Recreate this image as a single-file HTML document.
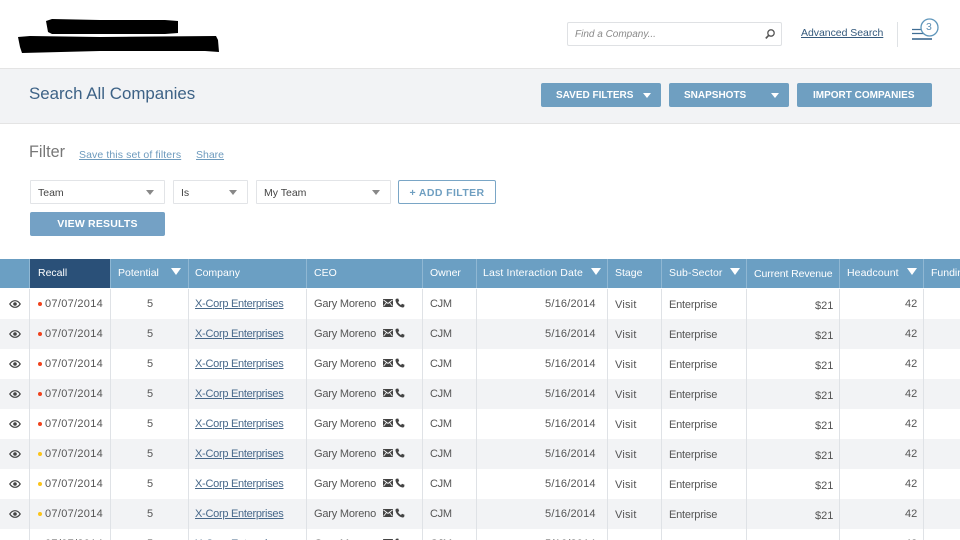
<!DOCTYPE html>
<html>
<head>
<meta charset="utf-8">
<style>
html,body{margin:0;padding:0;background:#fff}
#p{position:relative;width:960px;height:540px;overflow:hidden;background:#fff;font-family:"Liberation Sans",sans-serif;font-size:10.5px;color:#555;filter:blur(.25px)}
#p div,#p span,#p a,#p svg{position:absolute;white-space:nowrap}
.btn{background:#6f9fc1;border-radius:2px;top:83px;height:24px;line-height:24px;color:#fff;font-weight:bold;font-size:10px}
.btn span{top:1px}
.tri{width:0;height:0;border-left:4px solid transparent;border-right:4px solid transparent;border-top:5px solid #fff}
.sel{top:180px;height:22px;line-height:24px;background:#fff;border:1px solid #e2e4e7;border-radius:1px;color:#444;font-size:10.5px}
.sel i{position:absolute;top:9px;width:0;height:0;border-left:4px solid transparent;border-right:4px solid transparent;border-top:5px solid #888}
.sel span{left:7px;top:0}
.lnk{color:#6d9abd;text-decoration:underline;font-size:10.5px;top:149px;letter-spacing:.1px}
.hd{top:259px;height:29px;background:#6b9fc3;left:0;width:960px}
.th{top:267px;color:#fff;font-size:10.5px;line-height:13px}
.st{top:268px;width:0;height:0;border-left:5px solid transparent;border-right:5px solid transparent;border-top:7px solid #fff}
.hl{top:259px;height:29px;width:1px;background:#8fb7d3}
.vl{top:289px;height:251px;width:1px;background:#dfe2e6}
.r{left:0;width:960px;height:30px}
.alt{background:#f2f3f5}
.r span{line-height:13px;font-size:11px;color:#555}
.r .d{left:45px;top:9px;letter-spacing:.3px}
.r .n{left:147px;top:9px}
.r a{left:195px;top:9px;color:#47688a;font-size:11px;text-decoration:underline;line-height:13px;letter-spacing:-.28px}
.r .g{left:314px;top:9px;letter-spacing:-.2px}
.r .o{left:430px;top:9px;letter-spacing:-.3px}
.r .l{left:545px;top:9px;letter-spacing:.2px}
.r .v{left:615px;top:10px;letter-spacing:.2px}
.r .e{left:669px;top:10px;letter-spacing:-.2px}
.r .m{left:815px;top:11px}
.r .h{left:905px;top:9px}
.dot{left:38px;top:13px;width:4px;height:4px;border-radius:50%}
.red{background:#f0421c}
.yel{background:#fcc419}
.eye{left:9px;top:10px}
.ml{left:383px;top:10px}
.ph{left:395px;top:9px}
</style>
</head>
<body>
<div id="p">
<svg style="left:0;top:0" width="260" height="60"><polygon fill="#000" points="46,21 52,19 100,20 165,20 178,21 178,33 165,34 52,34 48,32" /><polygon fill="#000" points="18,37 30,36 100,37 216,36 218,40 219,52 205,51 100,51 22,53 20,47" /></svg>

<div style="left:567px;top:22px;width:213px;height:22px;border:1px solid #dfe1e4;border-radius:2px;background:#fff"></div>
<span style="left:575px;top:28px;font-style:italic;color:#8a8a8a;font-size:10px;line-height:13px">Find a Company...</span>
<svg style="left:764px;top:28px" width="12" height="12" viewBox="0 0 12 12"><circle cx="7" cy="5" r="3.2" fill="none" stroke="#555" stroke-width="1.3"/><path d="M4.6 7.4L1.8 10.4" stroke="#555" stroke-width="1.7"/></svg>
<a style="left:801px;top:27px;color:#34597c;font-size:10.5px;line-height:13px;text-decoration:underline;letter-spacing:-.04px">Advanced Search</a>
<div style="left:897px;top:22px;width:1px;height:25px;background:#dfe2e5"></div>
<svg style="left:908px;top:15px" width="36" height="28"><path d="M4 14.5H16M4 18.5H20" stroke="#3f6d94" stroke-width="1.3"/><path d="M4 24H24" stroke="#2f5f88" stroke-width="1.6"/><circle cx="21.5" cy="12.5" r="8.5" fill="#fff" stroke="#5f96bb" stroke-width="1.3"/></svg>
<span style="left:926px;top:21px;color:#5f8fb3;font-size:10.5px;line-height:13px">3</span>

<div style="left:0;top:68px;width:960px;height:54px;background:#f2f3f5;border-top:1px solid #e4e4e4;border-bottom:1px solid #e4e4e4"></div>
<span style="left:29px;top:84px;font-size:16.9px;line-height:20px;color:#3d6286">Search All Companies</span>
<div class="btn" style="left:541px;width:120px"><span style="left:15px">SAVED FILTERS</span><div class="tri" style="left:102px;top:10px"></div></div>
<div class="btn" style="left:669px;width:120px"><span style="left:15px">SNAPSHOTS</span><div class="tri" style="left:102px;top:10px"></div></div>
<div class="btn" style="left:797px;width:135px"><span style="left:16px">IMPORT COMPANIES</span></div>

<span style="left:29px;top:142px;font-size:16.2px;line-height:20px;color:#777">Filter</span>
<a class="lnk" style="left:79px">Save this set of filters</a>
<a class="lnk" style="left:196px;letter-spacing:0">Share</a>

<div class="sel" style="left:30px;width:133px"><span>Team</span><i style="left:115px"></i></div>
<div class="sel" style="left:173px;width:73px"><span>Is</span><i style="left:55px"></i></div>
<div class="sel" style="left:256px;width:133px"><span>My Team</span><i style="left:115px"></i></div>
<div style="left:398px;top:180px;width:96px;height:22px;border:1px solid #7aa6c6;border-radius:2px;line-height:24px;text-align:center;color:#6f9fc1;font-weight:bold;font-size:10.5px;letter-spacing:.4px">+ ADD FILTER</div>
<div style="left:30px;top:212px;width:135px;height:24px;line-height:24px;background:#74a1c5;border-radius:2px;text-align:center;color:#fff;font-weight:bold;font-size:10.5px;letter-spacing:.2px">VIEW RESULTS</div>

<div class="hd"></div>
<div style="left:30px;top:259px;width:80px;height:29px;background:#2a5078"></div>
<div class="hl" style="left:29px"></div><div class="hl" style="left:110px"></div><div class="hl" style="left:188px"></div><div class="hl" style="left:306px"></div><div class="hl" style="left:422px"></div><div class="hl" style="left:476px"></div><div class="hl" style="left:607px"></div><div class="hl" style="left:661px"></div><div class="hl" style="left:746px"></div><div class="hl" style="left:839px"></div><div class="hl" style="left:923px"></div>
<span class="th" style="left:38px">Recall</span>
<span class="th" style="left:118px">Potential</span><div class="st" style="left:171px"></div>
<span class="th" style="left:195px">Company</span>
<span class="th" style="left:314px">CEO</span>
<span class="th" style="left:430px">Owner</span>
<span class="th" style="left:483px;letter-spacing:.15px">Last Interaction Date</span><div class="st" style="left:591px"></div>
<span class="th" style="left:615px">Stage</span>
<span class="th" style="left:669px;letter-spacing:.1px">Sub-Sector</span><div class="st" style="left:730px"></div>
<span class="th" style="left:754px;top:268px;letter-spacing:-.1px">Current Revenue</span>
<span class="th" style="left:847px;letter-spacing:.1px">Headcount</span><div class="st" style="left:907px"></div>
<span class="th" style="left:931px">Funding</span>

<svg width="0" height="0" style="left:0;top:0"><defs>
<symbol id="eye" viewBox="0 0 12 10"><path d="M.8 5C2.3 2.7 4 1.7 6 1.7S9.7 2.7 11.2 5C9.7 7.3 8 8.3 6 8.3S2.3 7.3.8 5Z" fill="none" stroke="#444" stroke-width="1.2"/><circle cx="6" cy="5" r="1.8" fill="#444"/></symbol>
<symbol id="ml" viewBox="0 0 10 8"><rect width="10" height="8" fill="#444"/><path d="M.5 1L5 4.5L9.5 1M.5 7.2L3.5 3.5M9.5 7.2L6.5 3.5" fill="none" stroke="#fff" stroke-width=".8"/></symbol>
<symbol id="ph" viewBox="0 0 10 10"><path d="M1.2 .8L3.2 .5L4.2 3L3 4C3.6 5.3 4.7 6.4 6 7L7 5.8L9.5 6.8L9.2 8.8C8.8 9.5 8 9.6 7 9.4C3.8 8.5 1.5 6.2 .6 3C.4 2 .5 1.2 1.2 .8Z" fill="#444"/></symbol>
</defs></svg>

<div class="r" style="top:289px"><svg class="eye" width="12" height="10"><use href="#eye"/></svg><div class="dot red"></div><span class="d">07/07/2014</span><span class="n">5</span><a>X-Corp Enterprises</a><span class="g">Gary Moreno</span><svg class="ml" width="10" height="8"><use href="#ml"/></svg><svg class="ph" width="10" height="10"><use href="#ph"/></svg><span class="o">CJM</span><span class="l">5/16/2014</span><span class="v">Visit</span><span class="e">Enterprise</span><span class="m">$21</span><span class="h">42</span></div>
<div class="r alt" style="top:319px"><svg class="eye" width="12" height="10"><use href="#eye"/></svg><div class="dot red"></div><span class="d">07/07/2014</span><span class="n">5</span><a>X-Corp Enterprises</a><span class="g">Gary Moreno</span><svg class="ml" width="10" height="8"><use href="#ml"/></svg><svg class="ph" width="10" height="10"><use href="#ph"/></svg><span class="o">CJM</span><span class="l">5/16/2014</span><span class="v">Visit</span><span class="e">Enterprise</span><span class="m">$21</span><span class="h">42</span></div>
<div class="r" style="top:349px"><svg class="eye" width="12" height="10"><use href="#eye"/></svg><div class="dot red"></div><span class="d">07/07/2014</span><span class="n">5</span><a>X-Corp Enterprises</a><span class="g">Gary Moreno</span><svg class="ml" width="10" height="8"><use href="#ml"/></svg><svg class="ph" width="10" height="10"><use href="#ph"/></svg><span class="o">CJM</span><span class="l">5/16/2014</span><span class="v">Visit</span><span class="e">Enterprise</span><span class="m">$21</span><span class="h">42</span></div>
<div class="r alt" style="top:379px"><svg class="eye" width="12" height="10"><use href="#eye"/></svg><div class="dot red"></div><span class="d">07/07/2014</span><span class="n">5</span><a>X-Corp Enterprises</a><span class="g">Gary Moreno</span><svg class="ml" width="10" height="8"><use href="#ml"/></svg><svg class="ph" width="10" height="10"><use href="#ph"/></svg><span class="o">CJM</span><span class="l">5/16/2014</span><span class="v">Visit</span><span class="e">Enterprise</span><span class="m">$21</span><span class="h">42</span></div>
<div class="r" style="top:409px"><svg class="eye" width="12" height="10"><use href="#eye"/></svg><div class="dot red"></div><span class="d">07/07/2014</span><span class="n">5</span><a>X-Corp Enterprises</a><span class="g">Gary Moreno</span><svg class="ml" width="10" height="8"><use href="#ml"/></svg><svg class="ph" width="10" height="10"><use href="#ph"/></svg><span class="o">CJM</span><span class="l">5/16/2014</span><span class="v">Visit</span><span class="e">Enterprise</span><span class="m">$21</span><span class="h">42</span></div>
<div class="r alt" style="top:439px"><svg class="eye" width="12" height="10"><use href="#eye"/></svg><div class="dot yel"></div><span class="d">07/07/2014</span><span class="n">5</span><a>X-Corp Enterprises</a><span class="g">Gary Moreno</span><svg class="ml" width="10" height="8"><use href="#ml"/></svg><svg class="ph" width="10" height="10"><use href="#ph"/></svg><span class="o">CJM</span><span class="l">5/16/2014</span><span class="v">Visit</span><span class="e">Enterprise</span><span class="m">$21</span><span class="h">42</span></div>
<div class="r" style="top:469px"><svg class="eye" width="12" height="10"><use href="#eye"/></svg><div class="dot yel"></div><span class="d">07/07/2014</span><span class="n">5</span><a>X-Corp Enterprises</a><span class="g">Gary Moreno</span><svg class="ml" width="10" height="8"><use href="#ml"/></svg><svg class="ph" width="10" height="10"><use href="#ph"/></svg><span class="o">CJM</span><span class="l">5/16/2014</span><span class="v">Visit</span><span class="e">Enterprise</span><span class="m">$21</span><span class="h">42</span></div>
<div class="r alt" style="top:499px"><svg class="eye" width="12" height="10"><use href="#eye"/></svg><div class="dot yel"></div><span class="d">07/07/2014</span><span class="n">5</span><a>X-Corp Enterprises</a><span class="g">Gary Moreno</span><svg class="ml" width="10" height="8"><use href="#ml"/></svg><svg class="ph" width="10" height="10"><use href="#ph"/></svg><span class="o">CJM</span><span class="l">5/16/2014</span><span class="v">Visit</span><span class="e">Enterprise</span><span class="m">$21</span><span class="h">42</span></div>
<div class="r" style="top:529px"><svg class="eye" width="12" height="10"><use href="#eye"/></svg><div class="dot yel"></div><span class="d">07/07/2014</span><span class="n">5</span><a>X-Corp Enterprises</a><span class="g">Gary Moreno</span><svg class="ml" width="10" height="8"><use href="#ml"/></svg><svg class="ph" width="10" height="10"><use href="#ph"/></svg><span class="o">CJM</span><span class="l">5/16/2014</span><span class="v">Visit</span><span class="e">Enterprise</span><span class="m">$21</span><span class="h">42</span></div>

<div class="vl" style="left:29px"></div><div class="vl" style="left:110px"></div><div class="vl" style="left:188px"></div><div class="vl" style="left:306px"></div><div class="vl" style="left:422px"></div><div class="vl" style="left:476px"></div><div class="vl" style="left:607px"></div><div class="vl" style="left:661px"></div><div class="vl" style="left:746px"></div><div class="vl" style="left:839px"></div><div class="vl" style="left:923px"></div>
</div>
</body>
</html>
